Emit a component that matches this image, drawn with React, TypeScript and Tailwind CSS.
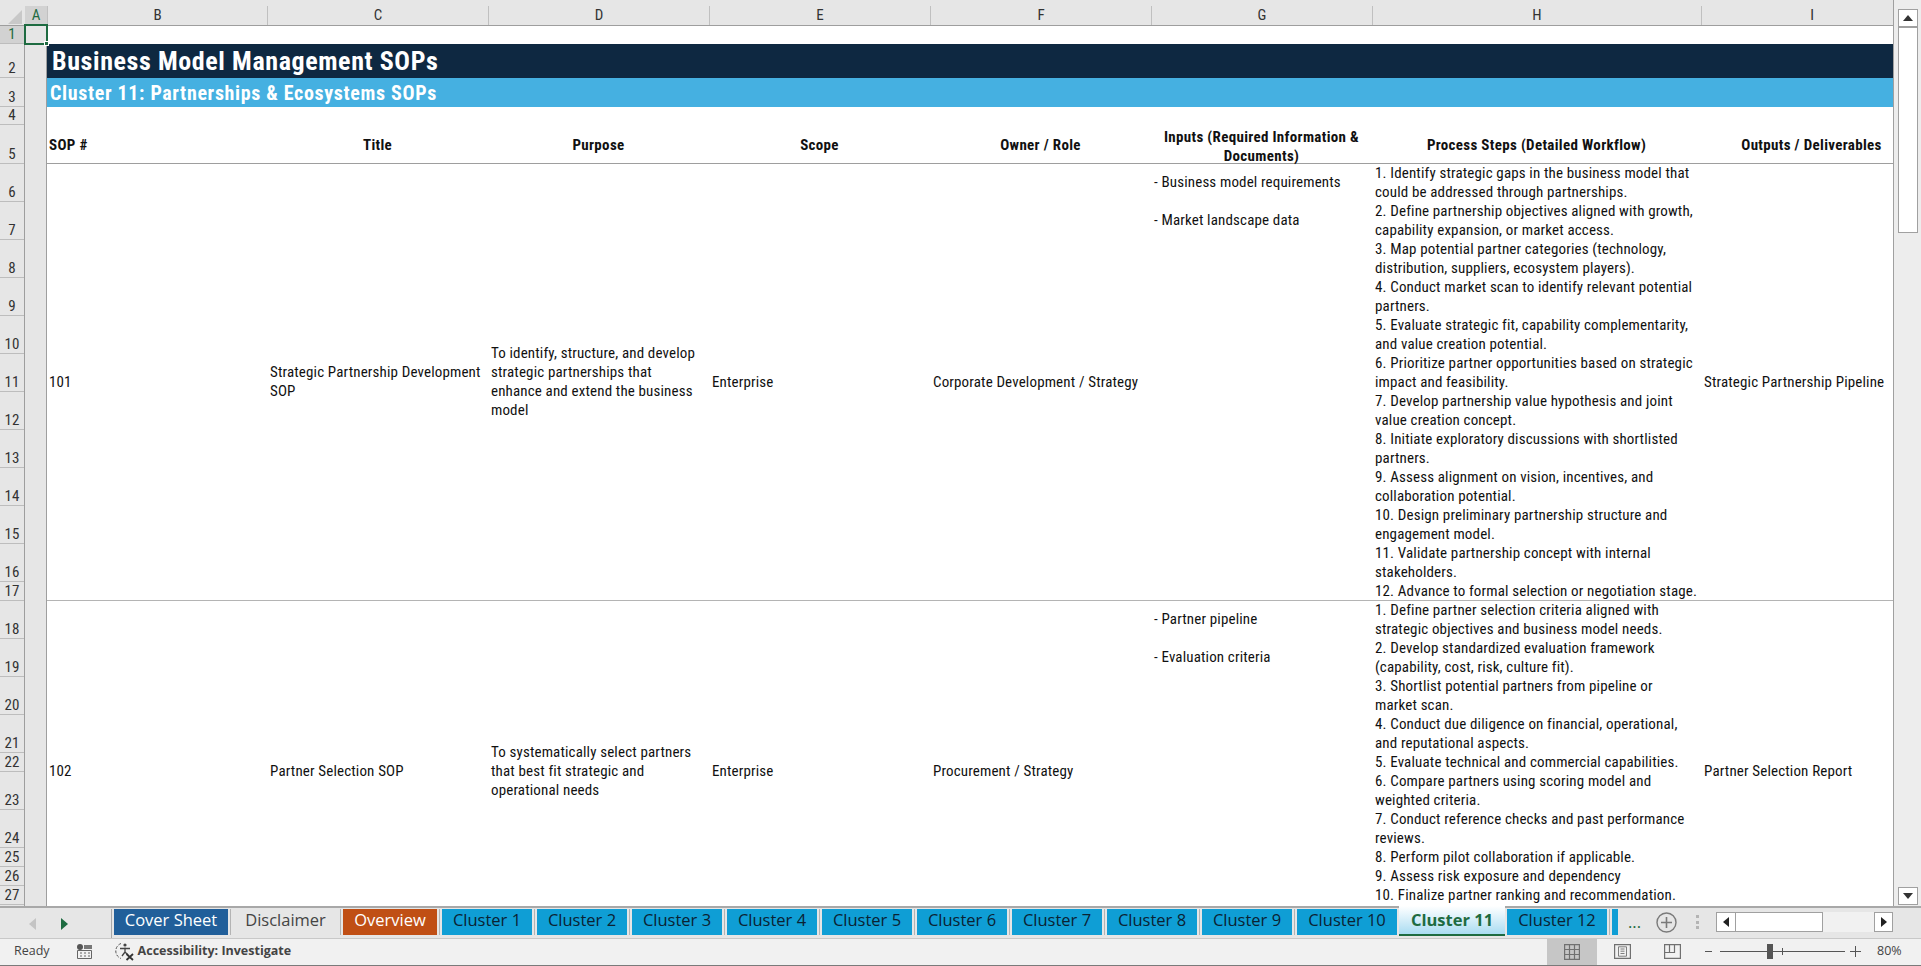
const columns = [
  { name: 'A', width: 'w-[23px]', active: true },
  { name: 'B', width: 'w-[220px]' },
  { name: 'C', width: 'w-[221px]' },
  { name: 'D', width: 'w-[221px]' },
  { name: 'E', width: 'w-[221px]' },
  { name: 'F', width: 'w-[221px]' },
  { name: 'G', width: 'w-[221px]' },
  { name: 'H', width: 'w-[329px]' },
  { name: 'I', width: 'w-[221px]' },
];

const rowHeights = [
  'h-[18px]', 'h-[34px]', 'h-[29px]', 'h-[18px]', 'h-[39px]',
  'h-[38px]', 'h-[38px]', 'h-[38px]', 'h-[38px]', 'h-[38px]', 'h-[38px]', 'h-[38px]', 'h-[38px]', 'h-[38px]', 'h-[38px]', 'h-[38px]',
  'h-[19px]', 'h-[38px]', 'h-[38px]', 'h-[38px]', 'h-[38px]', 'h-[19px]', 'h-[38px]', 'h-[38px]', 'h-[19px]', 'h-[19px]', 'h-[19px]',
];

const gridCols = 'grid grid-cols-[220px_221px_221px_221px_221px_221px_329px_221px]';

const sops = [
  {
    no: '101',
    height: 'h-[437px]',
    title: ['Strategic Partnership Development', 'SOP'],
    purpose: ['To identify, structure, and develop', 'strategic partnerships that', 'enhance and extend the business', 'model'],
    scope: 'Enterprise',
    owner: 'Corporate Development / Strategy',
    inputs: ['- Business model requirements', '', '- Market landscape data'],
    steps: [
      '1. Identify strategic gaps in the business model that',
      'could be addressed through partnerships.',
      '2. Define partnership objectives aligned with growth,',
      'capability expansion, or market access.',
      '3. Map potential partner categories (technology,',
      'distribution, suppliers, ecosystem players).',
      '4. Conduct market scan to identify relevant potential',
      'partners.',
      '5. Evaluate strategic fit, capability complementarity,',
      'and value creation potential.',
      '6. Prioritize partner opportunities based on strategic',
      'impact and feasibility.',
      '7. Develop partnership value hypothesis and joint',
      'value creation concept.',
      '8. Initiate exploratory discussions with shortlisted',
      'partners.',
      '9. Assess alignment on vision, incentives, and',
      'collaboration potential.',
      '10. Design preliminary partnership structure and',
      'engagement model.',
      '11. Validate partnership concept with internal',
      'stakeholders.',
      '12. Advance to formal selection or negotiation stage.',
    ],
    output: 'Strategic Partnership Pipeline',
  },
  {
    no: '102',
    height: 'h-[342px]',
    title: ['Partner Selection SOP'],
    purpose: ['To systematically select partners', 'that best fit strategic and', 'operational needs'],
    scope: 'Enterprise',
    owner: 'Procurement / Strategy',
    inputs: ['- Partner pipeline', '', '- Evaluation criteria'],
    steps: [
      '1. Define partner selection criteria aligned with',
      'strategic objectives and business model needs.',
      '2. Develop standardized evaluation framework',
      '(capability, cost, risk, culture fit).',
      '3. Shortlist potential partners from pipeline or',
      'market scan.',
      '4. Conduct due diligence on financial, operational,',
      'and reputational aspects.',
      '5. Evaluate technical and commercial capabilities.',
      '6. Compare partners using scoring model and',
      'weighted criteria.',
      '7. Conduct reference checks and past performance',
      'reviews.',
      '8. Perform pilot collaboration if applicable.',
      '9. Assess risk exposure and dependency',
      '10. Finalize partner ranking and recommendation.',
    ],
    output: 'Partner Selection Report',
  },
];

const headers = [
  { label: ['SOP #'], left: true },
  { label: ['Title'] },
  { label: ['Purpose'] },
  { label: ['Scope'] },
  { label: ['Owner / Role'] },
  { label: ['Inputs (Required Information &', 'Documents)'] },
  { label: ['Process Steps (Detailed Workflow)'] },
  { label: ['Outputs / Deliverables'] },
];

const tabs = [
  { name: 'Cover Sheet', cls: 'w-[114px] bg-[#215f9a] text-white' },
  { name: 'Disclaimer', cls: 'w-[105px] text-[#444444]' },
  { name: 'Overview', cls: 'w-[94px] bg-[#c04f15] text-white' },
  { name: 'Cluster 1', cls: 'w-[90px] bg-[#0f9ed5] text-[#0b2233]' },
  { name: 'Cluster 2', cls: 'w-[90px] bg-[#0f9ed5] text-[#0b2233]' },
  { name: 'Cluster 3', cls: 'w-[90px] bg-[#0f9ed5] text-[#0b2233]' },
  { name: 'Cluster 4', cls: 'w-[90px] bg-[#0f9ed5] text-[#0b2233]' },
  { name: 'Cluster 5', cls: 'w-[90px] bg-[#0f9ed5] text-[#0b2233]' },
  { name: 'Cluster 6', cls: 'w-[90px] bg-[#0f9ed5] text-[#0b2233]' },
  { name: 'Cluster 7', cls: 'w-[90px] bg-[#0f9ed5] text-[#0b2233]' },
  { name: 'Cluster 8', cls: 'w-[90px] bg-[#0f9ed5] text-[#0b2233]' },
  { name: 'Cluster 9', cls: 'w-[90px] bg-[#0f9ed5] text-[#0b2233]' },
];

function Lines({ lines }: { lines: string[] }) {
  return (
    <>
      {lines.map((line, i) => (
        <div key={i} className="h-[19px] whitespace-nowrap">{line}</div>
      ))}
    </>
  );
}

function ColumnHeader() {
  return (
    <div className="flex h-[26px] shrink-0 overflow-hidden border-b border-[#9e9e9e] bg-[#e6e6e6]">
      <div className="flex w-[25px] shrink-0 items-end justify-end pb-[1px] pr-[3px]">
        <svg width="14" height="14" viewBox="0 0 14 14"><path d="M14 0V14H0Z" fill="#c8c8c8" /></svg>
      </div>
      {columns.map((col) => (
        <div key={col.name} className={`${col.width} flex shrink-0 items-end justify-center`}>
          <div
            className={`flex h-[19px] w-full items-center justify-center border-r border-[#c0c0c0] text-[15px] leading-none [font-stretch:75%] ${
              col.active ? 'bg-[#d2d2d2] text-[#1e6b41]' : 'text-[#333333]'
            }`}
          >
            {col.name}
          </div>
        </div>
      ))}
    </div>
  );
}

function RowHeader() {
  return (
    <div className="w-[25px] shrink-0 border-r border-[#9e9e9e] bg-[#e6e6e6]">
      {rowHeights.map((height, i) => (
        <div
          key={i}
          className={`${height} flex items-end justify-center border-b border-[#bdbdbd] text-[15px] leading-[18px] [font-stretch:75%] ${
            i === 0 ? 'bg-[#d2d2d2] text-[#1e6b41]' : 'text-[#333333]'
          }`}
        >
          {i + 1}
        </div>
      ))}
    </div>
  );
}

function SopRow({ sop }: { sop: (typeof sops)[number] }) {
  return (
    <div className={`${gridCols} ${sop.height} shrink-0 border-b border-[#b4b4b4] text-[15px] leading-[19px] tracking-[0.15px] text-[#111111] [font-stretch:75%]`}>
      <div className="flex items-center pb-[1px] pl-[2px]">{sop.no}</div>
      <div className="flex flex-col justify-center pb-[1px] pl-[3px]"><Lines lines={sop.title} /></div>
      <div className="flex flex-col justify-center pb-[1px] pl-[3px]"><Lines lines={sop.purpose} /></div>
      <div className="flex items-center pb-[1px] pl-[3px]">{sop.scope}</div>
      <div className="flex items-center pb-[1px] pl-[3px]">{sop.owner}</div>
      <div className="pl-[3px] pt-[9px]"><Lines lines={sop.inputs} /></div>
      <div className="pl-[3px]"><Lines lines={sop.steps} /></div>
      <div className="flex items-center pb-[1px] pl-[3px]">{sop.output}</div>
    </div>
  );
}

function Sheet() {
  return (
    <div className="flex h-[880px] overflow-hidden">
      <RowHeader />
      <div className="w-[22px] shrink-0 border-r border-[#9e9e9e]" />
      <div className="flex w-[1847px] flex-col overflow-hidden bg-white">
        <div className="h-[18px] shrink-0" />
        <div className="flex h-[34px] shrink-0 items-center bg-[#0e2841] pl-[5px] text-[26px] font-bold tracking-[0.6px] text-white [font-stretch:75%]">
          Business Model Management SOPs
        </div>
        <div className="flex h-[29px] shrink-0 items-center bg-[#45b0e1] pl-[3px] text-[20px] font-bold tracking-[0.65px] text-white [font-stretch:75%]">
          Cluster 11: Partnerships &amp; Ecosystems SOPs
        </div>
        <div className="h-[18px] shrink-0" />
        <div className={`${gridCols} h-[39px] shrink-0 border-b border-[#9e9e9e] text-[15px] font-bold leading-[19px] tracking-[0.33px] text-[#111111] [font-stretch:75%]`}>
          {headers.map((h, i) => (
            <div
              key={i}
              className={`flex flex-col justify-center ${h.left ? 'items-start pl-[2px]' : 'items-center'} ${h.label.length > 1 ? 'pt-[3px]' : ''}`}
            >
              <Lines lines={h.label} />
            </div>
          ))}
        </div>
        {sops.map((sop) => (
          <SopRow key={sop.no} sop={sop} />
        ))}
      </div>
    </div>
  );
}

function ScrollButton({ up }: { up?: boolean }) {
  return (
    <div className="flex h-[18px] w-[20px] items-center justify-center border border-[#a0a0a0] bg-white">
      <svg width="10" height="6" viewBox="0 0 10 6">
        <path d={up ? 'M5 0L10 6H0Z' : 'M5 6L10 0H0Z'} fill="#333333" />
      </svg>
    </div>
  );
}

function VerticalScrollbar() {
  return (
    <div className="flex w-[27px] shrink-0 flex-col items-center bg-[#ededed] pb-[1px] pl-[1px] pt-[9px]">
      <ScrollButton up />
      <div className="h-[206px] w-[20px] border border-[#a0a0a0] bg-white" />
      <div className="flex-1" />
      <ScrollButton />
    </div>
  );
}

function TabBar() {
  return (
    <div className="flex h-[33px] shrink-0 border-b border-[#c8c8c8] border-t-2 border-t-[#a8a8a8] bg-[#e6e6e6] pt-[1px] [font-family:'Open_Sans',sans-serif] text-[16.5px] leading-none">
      <div className="relative flex w-[112px] items-center border-r border-[#a8a8a8]">
        <svg className="ml-[29px]" width="7" height="12" viewBox="0 0 7 12"><path d="M7 0V12L0 6Z" fill="#c4c4c4" /></svg>
        <svg className="ml-[25px]" width="7" height="12" viewBox="0 0 7 12"><path d="M0 0V12L7 6Z" fill="#1e6b41" /></svg>
      </div>
      <div className="flex items-start pl-[2px]">
        {tabs.map((tab) => (
          <div key={tab.name} className="flex h-[26px] items-center">
            <div className={`${tab.cls} flex h-[26px] items-center justify-center pb-[3px]`}>{tab.name}</div>
            <div className="mx-[2px] h-[26px] w-px bg-[#b4b4b4]" />
          </div>
        ))}
        <div className="flex h-[26px] w-[100px] items-center justify-center bg-[#0f9ed5] pb-[3px] text-[#0b2233]">Cluster 10</div>
        <div className="mx-[2px] mt-[-3px] flex h-[30px] w-[106px] items-center justify-center border-b-2 border-b-[#1e6b41] bg-gradient-to-b from-white to-[#a9dcf2] font-bold text-[#1e6b41]">
          Cluster 11
        </div>
        <div className="flex h-[26px] w-[100px] items-center justify-center bg-[#0f9ed5] pb-[3px] text-[#0b2233]">Cluster 12</div>
        <div className="mx-[2px] h-[26px] w-px bg-[#b4b4b4]" />
        <div className="h-[26px] w-[6px] bg-[#0f9ed5]" />
      </div>
      <div className="ml-[10px] flex h-[26px] items-center text-[#1e6b41]">...</div>
      <div className="ml-[15px] flex h-[26px] items-center">
        <svg width="21" height="21" viewBox="0 0 21 21" fill="none" stroke="#7a7a7a">
          <circle cx="10.5" cy="10.5" r="9.5" strokeWidth="1.4" />
          <path d="M10.5 5V16M5 10.5H16" strokeWidth="1.6" />
        </svg>
      </div>
      <div className="ml-[19px] mt-[6px] flex h-[14px] flex-col justify-between">
        <div className="h-[3px] w-[3px] bg-[#b4b4b4]" />
        <div className="h-[3px] w-[3px] bg-[#b4b4b4]" />
        <div className="h-[3px] w-[3px] bg-[#b4b4b4]" />
      </div>
      <div className="ml-[17px] mt-[3px] flex h-[20px] w-[177px] bg-[#f1f1f1]">
        <div className="flex w-[20px] items-center justify-center border border-[#a0a0a0] bg-white">
          <svg width="6" height="10" viewBox="0 0 6 10"><path d="M6 0V10L0 5Z" fill="#222222" /></svg>
        </div>
        <div className="w-[87px] border-y border-r border-[#a0a0a0] bg-white" />
        <div className="flex-1" />
        <div className="flex w-[19px] items-center justify-center border border-[#a0a0a0] bg-white">
          <svg width="6" height="10" viewBox="0 0 6 10"><path d="M0 0V10L6 5Z" fill="#222222" /></svg>
        </div>
      </div>
    </div>
  );
}

function StatusBar() {
  return (
    <div className="flex h-[27px] shrink-0 items-center border-b border-[#7a7a7a] bg-[#f1f1f1] pb-[2px] [font-family:'Open_Sans',sans-serif] text-[12.5px] text-[#444444]">
      <span className="ml-[14px]">Ready</span>
      <svg className="ml-[27px]" width="15" height="15" viewBox="0 0 15 15">
        <circle cx="3" cy="3" r="3" fill="#555555" />
        <rect x="7" y="1" width="8" height="4" fill="#777777" />
        <path d="M0.5 6.5H14.5V14.5H0.5Z" fill="none" stroke="#666666" />
        <path d="M3 9H5M7 9H9M11 9H13M3 12H5M7 12H9M11 12H13" stroke="#666666" />
      </svg>
      <svg className="ml-[23px]" width="20" height="20" viewBox="0 0 20 20" fill="none">
        <path d="M6 2.5A8 8 0 0 0 6 17.5" stroke="#555555" strokeDasharray="3 1.5" />
        <circle cx="10" cy="4" r="1.6" fill="#444444" />
        <path d="M5 7.5H15M10 6.5V11M10 11L7 15M10 11L13 14" stroke="#444444" strokeWidth="1.3" />
        <path d="M11.5 13L18 19M18 13L11.5 19" stroke="#333333" strokeWidth="1.8" />
      </svg>
      <span className="ml-[3px] font-bold">Accessibility: Investigate</span>
      <div className="flex-1" />
      <div className="mb-[-2px] flex h-[26px] w-[50px] items-center justify-center bg-[#c6c6c6]">
        <svg width="16" height="16" viewBox="0 0 16 16" fill="none" stroke="#707070" strokeWidth="1.2">
          <path d="M.6.6H15.4V15.4H.6ZM5.5.6V15.4M10.5.6V15.4M.6 5.5H15.4M.6 10.5H15.4" />
        </svg>
      </div>
      <div className="flex w-[50px] justify-center">
        <svg width="17" height="15" viewBox="0 0 17 15" fill="none" stroke="#707070" strokeWidth="1.2">
          <path d="M.6.6H16.4V14.4H.6Z" />
          <path d="M4.5 2.8H12.5V12.2H4.5ZM6.5 5H10.5M6.5 7.2H10.5M6.5 9.5H10.5" strokeWidth="0.9" />
        </svg>
      </div>
      <div className="flex w-[50px] justify-center">
        <svg width="17" height="15" viewBox="0 0 17 15" fill="none" stroke="#707070" strokeWidth="1.2">
          <path d="M.6.6H16.4V14.4H.6ZM5.5.6V8.5H.6M5.5 8.5H10.5V.6" />
        </svg>
      </div>
      <div className="ml-[8px] h-px w-[7px] bg-[#555555]" />
      <div className="relative ml-[8px] h-px w-[125px] bg-[#555555]">
        <div className="absolute left-[47px] top-[-7px] h-[15px] w-[6px] bg-[#555555]" />
        <div className="absolute left-[62px] top-[-3px] h-[7px] w-px bg-[#555555]" />
      </div>
      <svg className="ml-[5px]" width="11" height="11" viewBox="0 0 11 11"><path d="M5.5 0V11M0 5.5H11" stroke="#555555" /></svg>
      <span className="ml-[16px] w-[24px] whitespace-nowrap">80%</span>
      <div className="w-[20px]" />
    </div>
  );
}

export default function App() {
  return (
    <div className="flex h-[966px] w-[1921px] flex-col overflow-hidden bg-[#e6e6e6] [font-family:Roboto,sans-serif]">
      <div className="flex h-[906px] shrink-0">
        <div className="relative flex w-[1894px] flex-col border-r border-[#a0a0a0]">
          <ColumnHeader />
          <Sheet />
          {/* active cell A1 */}
          <div className="absolute left-[24px] top-[24px] h-[21px] w-[24px] border-2 border-[#1e6b41]">
            <div className="absolute bottom-[-3px] right-[-3px] h-[5px] w-[5px] border border-white bg-[#1e6b41]" />
          </div>
        </div>
        <VerticalScrollbar />
      </div>
      <TabBar />
      <StatusBar />
    </div>
  );
}
